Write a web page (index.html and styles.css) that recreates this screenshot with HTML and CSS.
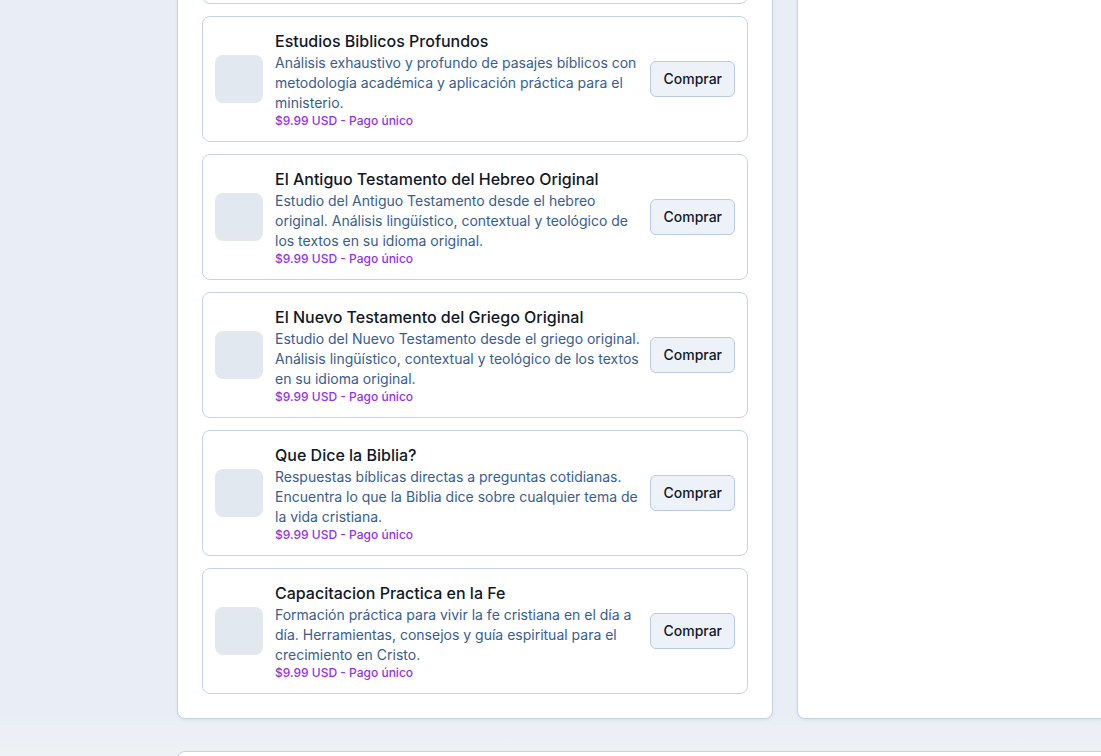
FILE: index.html
```html
<!DOCTYPE html>
<html lang="es">
<head>
<meta charset="utf-8">
<title>Cursos</title>
<link rel="stylesheet" href="styles.css">
</head>
<body>
<div class="page">
  <div class="columns">
    <section class="panel courses">
      <div class="course">
        <div class="thumb"></div>
        <div class="info">
          <h3 class="title">Fundamentos de la Fe Cristiana</h3>
          <p class="desc">Curso introductorio sobre las doctrinas esenciales de la fe cristiana y su aplicación en la vida diaria del creyente.</p>
          <p class="price">$9.99 USD - Pago único</p>
        </div>
        <button class="buy">Comprar</button>
      </div>
      <div class="course">
        <div class="thumb"></div>
        <div class="info">
          <h3 class="title">Estudios Biblicos Profundos</h3>
          <p class="desc">Análisis exhaustivo y profundo de pasajes bíblicos con metodología académica y aplicación práctica para el ministerio.</p>
          <p class="price">$9.99 USD - Pago único</p>
        </div>
        <button class="buy">Comprar</button>
      </div>
      <div class="course">
        <div class="thumb"></div>
        <div class="info">
          <h3 class="title">El Antiguo Testamento del Hebreo Original</h3>
          <p class="desc">Estudio del Antiguo Testamento desde el hebreo original. Análisis lingüístico, contextual y teológico de los textos en su idioma original.</p>
          <p class="price">$9.99 USD - Pago único</p>
        </div>
        <button class="buy">Comprar</button>
      </div>
      <div class="course">
        <div class="thumb"></div>
        <div class="info">
          <h3 class="title">El Nuevo Testamento del Griego Original</h3>
          <p class="desc">Estudio del Nuevo Testamento desde el griego original. Análisis lingüístico, contextual y teológico de los textos en su idioma original.</p>
          <p class="price">$9.99 USD - Pago único</p>
        </div>
        <button class="buy">Comprar</button>
      </div>
      <div class="course">
        <div class="thumb"></div>
        <div class="info">
          <h3 class="title">Que Dice la Biblia?</h3>
          <p class="desc">Respuestas bíblicas directas a preguntas cotidianas. Encuentra lo que la Biblia dice sobre cualquier tema de la vida cristiana.</p>
          <p class="price">$9.99 USD - Pago único</p>
        </div>
        <button class="buy">Comprar</button>
      </div>
      <div class="course">
        <div class="thumb"></div>
        <div class="info">
          <h3 class="title">Capacitacion Practica en la Fe</h3>
          <p class="desc">Formación práctica para vivir la fe cristiana en el día a día. Herramientas, consejos y guía espiritual para el crecimiento en Cristo.</p>
          <p class="price">$9.99 USD - Pago único</p>
        </div>
        <button class="buy">Comprar</button>
      </div>
    </section>
    <aside class="panel side"></aside>
  </div>
  <section class="panel bottom"></section>
</div>
</body>
</html>
```
FILE: styles.css
```css
* { box-sizing: border-box; }
html, body { margin: 0; padding: 0; }
body {
  height: 756px;
  overflow: hidden;
  font-family: Inter, "Noto Sans", "Liberation Sans", sans-serif;
  background: linear-gradient(180deg, #e9eef6 0%, #e9eef6 94%, #eef1f5 100%);
  color: #0f172a;
}
.page {
  margin-top: -147.5px;
  padding-left: 177px;
  width: 1600px;
  display: flex;
  flex-direction: column;
  gap: 32px;
}
.columns {
  display: grid;
  grid-template-columns: 596px 500px;
  gap: 24px;
}
.panel {
  background: #ffffff;
  border: 1px solid #c6d3e5;
  border-radius: 8px;
  box-shadow: 0 1px 3px rgba(100, 120, 150, 0.12);
}
.courses {
  padding: 24px;
  display: flex;
  flex-direction: column;
  gap: 12px;
}
.course {
  display: flex;
  align-items: center;
  gap: 12px;
  padding: 12px;
  border: 1px solid #c6d3e5;
  border-radius: 8px;
  background: #fff;
}
.thumb {
  flex: 0 0 48px;
  width: 48px;
  height: 48px;
  border-radius: 8px;
  background: #e2e8f0;
}
.info {
  flex: 1;
  min-width: 0;
  margin-right: -3px;
}
.title {
  margin: 0;
  font-size: 16px;
  line-height: 24px;
  font-weight: 500;
  color: #111827;
}
.desc {
  margin: 0;
  font-size: 14px;
  line-height: 20px;
  color: #385d90;
}
.price {
  margin: 0;
  font-size: 12px;
  line-height: 16px;
  font-weight: 500;
  color: #9333ea;
}
.buy {
  flex: 0 0 auto;
  height: 36px;
  padding: 0 12px;
  font-family: inherit;
  font-size: 14px;
  font-weight: 500;
  color: #111827;
  background: #edf2f9;
  border: 1px solid #b9cbe3;
  border-radius: 6px;
}
.bottom {
  height: 200px;
  width: 1400px;
}
```
